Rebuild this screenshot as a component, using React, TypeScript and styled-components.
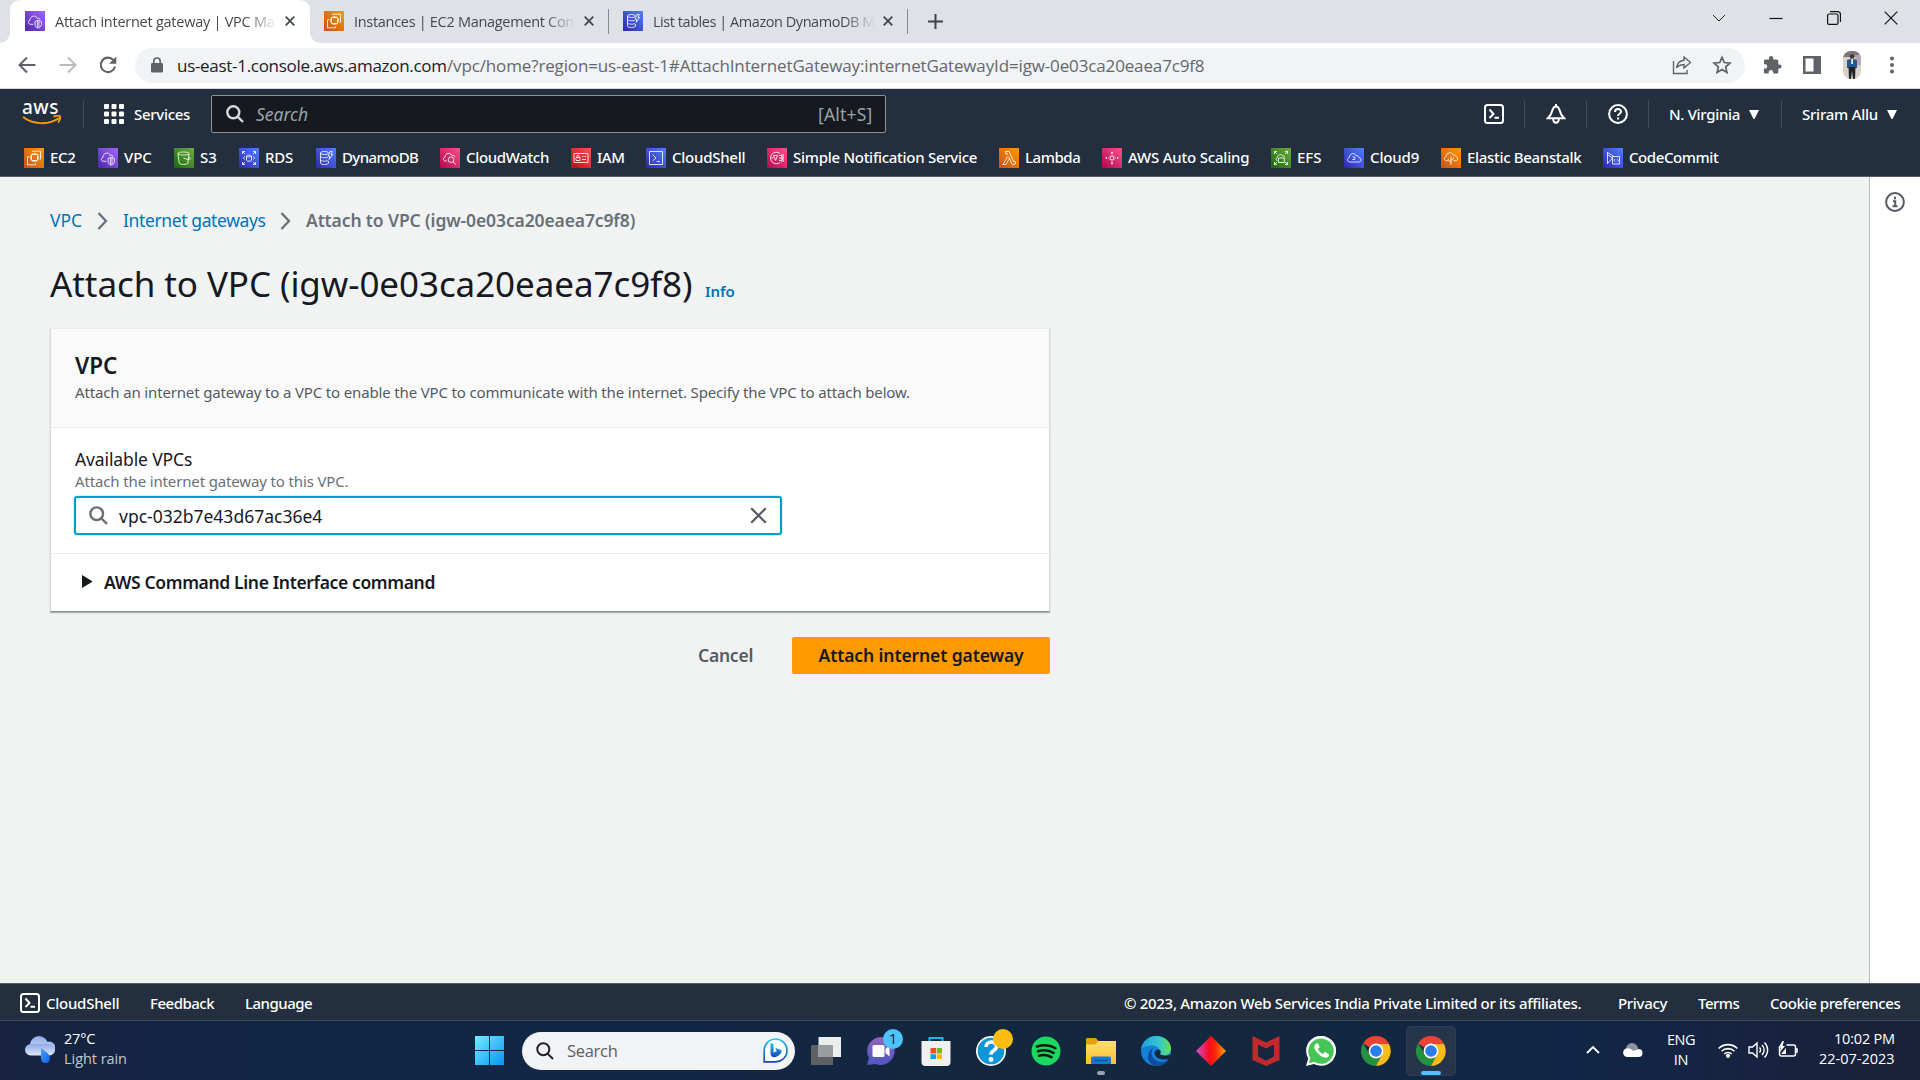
import React from "react";
import styled, { createGlobalStyle, css } from "styled-components";

const ember = `"Noto Sans", "Open Sans", sans-serif`;
const segoe = `"Open Sans", "Noto Sans", sans-serif`;

const Global = createGlobalStyle`
  * { box-sizing: border-box; }
  body { margin: 0; font-family: ${ember}; color: #16191f; overflow: hidden; }
  svg { display: block; flex: none; }
`;

const Screen = styled.div`
  width: 1920px;
  height: 1080px;
  display: flex;
  flex-direction: column;
  overflow: hidden;
  background: #f1f3f3;
`;

type TextProps = { $w?: number; $ls?: number; $size?: number; $weight?: number; $color?: string };
const Text = styled.span<TextProps>`
  display: block;
  flex: none;
  white-space: nowrap;
  ${(p) => p.$w && css`width: ${p.$w}px;`}
  letter-spacing: ${(p) => p.$ls ?? 0}px;
  font-size: ${(p) => p.$size ?? 15}px;
  font-weight: ${(p) => p.$weight ?? 400};
  color: ${(p) => p.$color ?? "inherit"};
`;

/* ---------- browser chrome ---------- */

const TabStrip = styled.div`
  display: flex;
  height: 43px;
  flex: none;
  background: #dee1e6;
  font-family: ${segoe};
  color: #45494d;
`;

const Tab = styled.div<{ $active?: boolean; $w: number }>`
  position: relative;
  display: flex;
  align-items: center;
  width: ${(p) => p.$w}px;
  height: 43px;
  padding: 0 0 1px 14px;
  ${(p) =>
    p.$active &&
    css`
      margin-left: 10px;
      padding-left: 15px;
      background: #fff;
      border-radius: 10px 10px 0 0;
      &::before,
      &::after {
        content: "";
        position: absolute;
        bottom: 0;
        width: 10px;
        height: 10px;
      }
      &::before {
        left: -10px;
        background: radial-gradient(circle at 0 0, transparent 9.5px, #fff 10px);
      }
      &::after {
        right: -10px;
        background: radial-gradient(circle at 100% 0, transparent 9.5px, #fff 10px);
      }
    `}
`;

const TabTitle = styled(Text)`
  margin-left: 10px;
  margin-right: 8px;
  mask-image: linear-gradient(to right, #000 86%, transparent 100%);
`;

const TabSeparator = styled.i`
  width: 1px;
  height: 25px;
  margin-top: 9px;
  background: #868a8f;
`;

const WindowButtons = styled.div`
  display: flex;
  gap: 43.4px;
  align-items: center;
  height: 36px;
  margin-left: auto;
  padding-right: 22px;
`;

const Toolbar = styled.div`
  display: flex;
  align-items: center;
  height: 46px;
  flex: none;
  padding: 0 17px 1px 17px;
  background: #fff;
  border-bottom: 1px solid #d5d7da;
`;

const NavIcons = styled.div`
  display: flex;
  gap: 20.5px;
  width: 118px;
`;

const AddressBar = styled.div`
  display: flex;
  flex: none;
  align-items: center;
  width: 1610px;
  height: 35px;
  padding: 0 13px 0 15px;
  border-radius: 18px;
  background: #f1f3f4;
  font-family: ${segoe};
  color: #202124;
`;

const AddressActions = styled.div`
  display: flex;
  gap: 20px;
  margin-left: auto;
`;

const ToolbarActions = styled.div`
  display: flex;
  align-items: center;
  gap: 20px;
  margin-left: 17px;
`;

/* ---------- service icons ---------- */

const Tile = styled.span<{ $from: string; $to: string }>`
  display: block;
  flex: none;
  width: 20px;
  height: 20px;
  background: linear-gradient(45deg, ${(p) => p.$from}, ${(p) => p.$to});
`;

const tones: Record<string, [string, string]> = {
  orange: ["#c8511b", "#ff9900"],
  purple: ["#4d27a8", "#a166ff"],
  green: ["#1b660f", "#6cae3e"],
  blue: ["#2e27ad", "#527fff"],
  pink: ["#b0084d", "#ff4f8b"],
  red: ["#bd0816", "#ff5252"],
};

const glyphs: Record<string, React.ReactNode> = {
  ec2: <path d="M7.500 6.500h6v6h-6zM9 6.500V5M10.500 6.500V5M12 6.500V5M9 12.500V14M10.500 12.500V14M12 12.500V14M7.500 8H6M7.500 9.500H6M7.500 11H6M13.500 8H15M13.500 9.500H15M13.500 11H15M8.500 4V3.200h8v8h-.9M5.500 8.800H3.500v8h8v-1.500" />,
  vpc: <path d="M8.300 13.300H5.800C2.700 13.300 2.500 9.700 5 9.300 4.800 4.500 11 3.600 12.200 7.500c1.700-.8 2.800.2 2.900 1.400M10 10.500l3.200-1.200 3.200 1.200v3c0 2-1.400 3-3.200 3.600-1.800-.6-3.200-1.600-3.200-3.600zM12.400 10v6.500M14 10v6.500" />,
  s3: <path d="M4 5.500c0-2 11-2 11 0s-11 2-11 0zM4 5.500l1.300 10c1.500 1.300 7 1.300 8.500 0L15 5.500M9.500 10c3 1.300 6.500 2 7 1 .3-.7-1-1.400-2-1.900" />,
  rds: <path d="M7.500 8c0-1.200 5-1.200 5 0v4.300c0 1.200-5 1.200-5 0zM7.500 8c0 1.200 5 1.200 5 0M3.500 6V3.500H6M3.500 3.500 6 6M14 3.500h2.500V6M16.500 3.500 14 6M3.500 14v2.500H6M3.500 16.500 6 14M14 16.500h2.500V14M16.500 16.500 14 14M5.500 8.500 4.500 10l1 1.500M14.500 8.500l1 1.500-1 1.500" />,
  dynamo: <path d="M4.500 5c0-2 8-2 8 0s-8 2-8 0v10c0 2 8 2 8 0v-2M4.500 8.300c0 1.700 6 1.900 7.500.8M4.500 11.700c0 1.700 6 1.900 7.500.8M14 3.500h2.300L15 6.500h1.700L13 11.500l.8-3.300h-1.600z" />,
  watch: <path d="M7 13H5.500C2.800 13 2.700 9.800 5 9.300 4.800 5 10.600 4 12 7.600c1.500-.6 2.600.1 2.900 1.400M8.300 11.700a2.800 2.800 0 1 1 5.600 0 2.800 2.800 0 1 1-5.600 0M13 13.800l3 2.800" />,
  iam: <path d="M3 5.500h14v9H3zM5 9.500h4v3H5zM5.900 9.500V8c0-1.200 2.200-1.200 2.200 0v1.500M11 8.500h1.500M13.500 8.500H15M11 11.500h4" />,
  shell: <path d="M3.500 3.500h13v13h-13zM6.500 6.500 10 10l-3.500 3M10.500 13.500H14" />,
  sns: <path d="M13 5.500A5.800 5.800 0 1 0 13 14.500M6.500 7.500l2 5 2-5zM4 10h2.500M12 7.500h2M12 10h2M12 12.500h2M14.500 6.700h1.800v1.600h-1.800zM14.500 9.200h1.800v1.600h-1.800zM14.500 11.700h1.800v1.600h-1.800z" />,
  lambda: <path d="M6.500 3.500h3.700l4.500 10.300 1.300-.4.600 2.400-3.200 1L9.700 8.700M9 5.900H6.700V3.500M8.600 8.500 3.900 16.500h3l3.200-5.400" />,
  scaling: <path d="M8.200 8.200h3.600v3.600H8.200zM10 6.800V4M9 5l1-1.200L11 5M10 13.200V16M9 15l1 1.200 1-1.200M6.800 10H6M4.500 9v2M3.500 10h1.500M13.200 10h.8M15.500 9v2M15 10h1.500" />,
  efs: <path d="M6.500 12.800c-2-.5-1.700-2.800-.2-3 .2-3.500 4.500-4 5.500-1.700 1.300-.4 2 .6 2 1.400M7.500 10h5.800v4.500H7.500zM3.500 6V3.500H6M3.500 3.500 6 6M14 3.500h2.500V6M16.500 3.500 14 6M3.500 14v2.500H6M3.500 16.500 6 14M14 16.500h2.500V14M16.500 16.500 14 14" />,
  cloud9: <path d="M6 14C2.800 14 2.600 10.300 5.200 9.800 5.200 5.200 11 4.200 12.300 8c1.600-.6 2.600.4 2.700 1.600C18 10.200 17.600 14 14.700 14zM8.500 9h2.300v2.500H8.300" />,
  beanstalk: <path d="M7.500 12.700H5.500C2.700 12.500 2.700 9 5 8.700 5 4.300 10.800 3.500 12.200 7c1.600-.6 2.600.4 2.700 1.600 2.600.5 2.300 4-.4 4.100h-2M10 16.800V8.500M10 13.500c-2.200 0-2.700-1.300-2.700-2.800M10 12c2 0 2.500-1 2.500-2.500" />,
  commit: <path d="M4.500 4v12M4.500 4.500 11 8.500M4.500 6.500 9.500 10 4.500 15.500M9.500 8.500h7v7.500h-7zM12 11l-1.200 1.200L12 13.500M14.300 11l1.200 1.200-1.200 1.300" />,
};

function ServiceIcon({ tone, name }: { tone: string; name: string }) {
  return (
    <Tile $from={tones[tone][0]} $to={tones[tone][1]}>
      <svg width="20" height="20" viewBox="0 0 20 20" fill="none" stroke="#fff" strokeOpacity=".9" strokeWidth=".9">
        {glyphs[name]}
      </svg>
    </Tile>
  );
}

/* ---------- AWS header ---------- */

const Header = styled.header`
  height: 88px;
  flex: none;
  background: #232f3e;
  border-bottom: 1px solid #545b64;
  color: #fff;
`;

const HeaderRow = styled.div`
  display: flex;
  align-items: center;
  height: 50px;
  padding-left: 22px;
`;

const Divider = styled.i<{ $after?: number }>`
  flex: none;
  width: 1px;
  height: 28px;
  margin: 0 ${(p) => p.$after ?? 20}px 0 20px;
  background: #414d5c;
`;

const LogoBox = styled.div`
  width: 41px;
  height: 28px;
  line-height: 15px;
`;

const SearchBox = styled.div`
  display: flex;
  align-items: center;
  width: 675px;
  height: 38px;
  margin-left: 21px;
  padding: 0 12px 0 14px;
  border: 1px solid #879596;
  border-radius: 2px;
  background: #16191f;
`;

const Placeholder = styled(Text)`
  margin: -1px auto 0 12px;
  font-style: italic;
`;

const HeaderTools = styled.div`
  display: flex;
  align-items: center;
  margin-left: auto;
  padding-right: 23px;
`;

const Favorites = styled.nav`
  display: flex;
  gap: 22px;
  padding: 9px 0 0 24px;
`;

const Favorite = styled.a`
  display: flex;
  align-items: center;
  gap: 6px;
  height: 20px;
  & > span:last-child { margin-top: -2px; }
`;

/* ---------- page ---------- */

const Page = styled.div`
  display: flex;
  flex: 1;
  min-height: 0;
`;

const Main = styled.main`
  width: 1869px;
  padding: 28px 50px 0;
`;

const HelpPanel = styled.aside`
  display: flex;
  justify-content: center;
  flex: 1;
  padding-top: 15px;
  border-left: 1px solid #b8bdbd;
  background: #fff;
`;

const Breadcrumbs = styled.div`
  display: flex;
  align-items: center;
  height: 30px;
  gap: 14px;
  svg { margin: 2px 1px 0 0; }
`;

const TitleRow = styled.div`
  display: flex;
  align-items: baseline;
  height: 48px;
  margin: 25px 0 20px;
  line-height: 48px;
`;

const Card = styled.section`
  width: 1000px;
  height: 284px;
  border: 1px solid #d5dbdb;
  border-top-color: #eaeded;
  border-bottom-color: #879596;
  background: #fff;
  box-shadow: 0 1px 1px rgba(0, 28, 36, 0.3);
`;

const CardHeader = styled.div`
  height: 99px;
  padding: 20px 24px;
  border-bottom: 1px solid #eaeded;
  background: #fafafa;
  h2 { margin: 0; font-size: 22.5px; line-height: 33px; }
`;

const CardBody = styled.div`
  height: 126px;
  padding: 19px 24px;
  border-bottom: 1px solid #eaeded;
`;

const Field = styled.div`
  display: flex;
  align-items: center;
  width: 708px;
  height: 39px;
  margin: 5px 0 0 -1px;
  padding: 0 10px 0 13px;
  border: 2px solid #00a1c9;
  border-radius: 3px;
  box-shadow: 0 0 0 1px #d8f0f5;
  background: #fff;
`;

const Expander = styled.div`
  display: flex;
  align-items: center;
  gap: 12px;
  height: 55px;
  padding-left: 31px;
`;

const Actions = styled.div`
  display: flex;
  align-items: center;
  justify-content: flex-end;
  width: 1000px;
  margin-top: 25px;
`;

const Primary = styled.button`
  display: flex;
  align-items: center;
  justify-content: center;
  width: 258px;
  height: 37px;
  margin-left: 39px;
  padding: 0 0 2px;
  border: 0;
  border-radius: 2px;
  background: #ff9900;
  font-family: inherit;
`;

const CancelLabel = styled(Text)`
  margin-top: -2px;
`;

const Footer = styled.footer`
  display: flex;
  align-items: center;
  height: 37px;
  flex: none;
  padding: 1px 20px 0;
  border-top: 1px solid #545b64;
  background: #232f3e;
  color: #fff;
`;

const FooterLinks = styled.div<{ $right?: boolean }>`
  display: flex;
  gap: 31px;
  ${(p) => p.$right && css`margin-left: auto;`}
`;

/* ---------- taskbar ---------- */

const Taskbar = styled.div`
  display: flex;
  align-items: center;
  height: 60px;
  flex: none;
  padding: 0 25px;
  border-top: 1px solid #3f4956;
  background: linear-gradient(90deg, #172340 0, #122645 14%, #122646 33%, #13273f 48%, #13273f 66%, #112646 82%, #162341 90%, #1b2138 100%);
  font-family: ${segoe};
  color: #fff;
`;

const Stack = styled.div<{ $align?: string; $lift?: number }>`
  display: flex;
  flex-direction: column;
  align-items: ${(p) => p.$align ?? "flex-start"};
  padding-bottom: ${(p) => p.$lift ?? 4}px;
  line-height: 20px;
`;

const Weather = styled.div`
  display: flex;
  align-items: center;
  gap: 9px;
  width: 450px;
  svg { margin-bottom: 2px; }
`;

const TaskSearch = styled.div`
  display: flex;
  align-items: center;
  width: 273px;
  height: 38px;
  margin: 0 6px 0 18px;
  padding: 0 7px 0 14px;
  border-radius: 19px;
  background: #f1f3f6;
`;

const TaskIcon = styled.div<{ $active?: boolean; $mark?: string }>`
  position: relative;
  display: flex;
  align-items: center;
  justify-content: center;
  width: 50px;
  height: 50px;
  margin-right: 5px;
  border-radius: 5px;
  ${(p) => p.$active && css`background: #25364c; box-shadow: inset 0 0 0 1px #2d3d52;`}
  ${(p) =>
    p.$mark &&
    css`
      &::after {
        content: "";
        position: absolute;
        bottom: 1px;
        width: ${p.$active ? 20 : 8}px;
        height: 4px;
        border-radius: 2px;
        background: ${p.$mark};
      }
    `}
`;

const Badge = styled.b<{ $color: string }>`
  position: absolute;
  top: 3px;
  right: 3px;
  width: 20px;
  height: 20px;
  border-radius: 50%;
  background: ${(p) => p.$color};
  color: #12233a;
  font-size: 15px;
  font-weight: 400;
  line-height: 19px;
  text-align: center;
`;

const Tray = styled.div`
  display: flex;
  align-items: center;
  margin-left: auto;
  & > svg { margin-bottom: 2px; }
`;

const Spacer = styled.i<{ $w: number }>`
  flex: none;
  width: ${(p) => p.$w}px;
`;

const favorites: [string, string, string, number, number][] = [
  ["EC2", "orange", "ec2", 26, -0.3],
  ["VPC", "purple", "vpc", 28, -0.1],
  ["S3", "green", "s3", 17, -0.1],
  ["RDS", "blue", "rds", 29, -0.2],
  ["DynamoDB", "blue", "dynamo", 76, -0.6],
  ["CloudWatch", "pink", "watch", 83, -0.34],
  ["IAM", "red", "iam", 27, -0.5],
  ["CloudShell", "blue", "shell", 73, -0.25],
  ["Simple Notification Service", "pink", "sns", 184, -0.28],
  ["Lambda", "orange", "lambda", 55, -0.45],
  ["AWS Auto Scaling", "pink", "scaling", 121, -0.2],
  ["EFS", "green", "efs", 25, 0],
  ["Cloud9", "blue", "cloud9", 49, -0.15],
  ["Elastic Beanstalk", "orange", "beanstalk", 114, -0.32],
  ["CodeCommit", "blue", "commit", 89, -0.42],
];

const CloseX = ({ size = 10, color = "#45494d", stroke = 1.8 }) => (
  <svg width={size} height={size} viewBox="0 0 10 10" stroke={color} strokeWidth={stroke}>
    <path d="M.7.7l8.600 8.600M9.300.7.7 9.300" />
  </svg>
);

const Magnifier = ({ size, color, stroke = 2.2 }: { size: number; color: string; stroke?: number }) => (
  <svg width={size} height={size} viewBox="0 0 18 18" fill="none" stroke={color} strokeWidth={stroke}>
    <circle cx="7.300" cy="7.300" r="6" />
    <path d="M11.600 11.600 17 17" />
  </svg>
);

const Terminal = () => (
  <svg width="20" height="20" viewBox="0 0 20 20" fill="none" stroke="#fff" strokeWidth="2">
    <rect x="1" y="1" width="18" height="18" rx="2.500" />
    <path d="M5.500 5.500 9.500 10l-4 4M10.500 13.800H15" />
  </svg>
);

const Caret = () => (
  <svg width="10" height="9" viewBox="0 0 10 9" fill="#fff">
    <path d="M0 0h10L5.500 9h-1z" />
  </svg>
);

const Crumb = () => (
  <svg width="11" height="18" viewBox="0 0 11 18" fill="none" stroke="#687078" strokeWidth="2.300">
    <path d="M1.500 1 9 9l-7.500 8" />
  </svg>
);

const Chrome = () => (
  <svg width="30" height="30" viewBox="0 0 30 30">
    <path d="M15 15 2 7.500A15 15 0 0 1 28 7.500L27.500 8H15z" fill="#ea4335" />
    <path d="M2 7.500A15 15 0 0 0 15 30l6.200-11.400L15 15 8.900 18.600z" fill="#24933f" />
    <path d="M28 7.900A15 15 0 0 1 15 30l6.100-11.400A7 7 0 0 0 15 8z" fill="#fbbc1a" />
    <circle cx="15" cy="15" r="7.400" fill="#fff" />
    <circle cx="15" cy="15" r="5.800" fill="#2b7de9" />
  </svg>
);

function Logo() {
  return (
    <LogoBox>
      <Text $size={19} $weight={500} $w={37} $ls={0.5}>aws</Text>
      <svg width="40" height="11" viewBox="0 0 40 11" fill="none" stroke="#ff9900" strokeWidth="1.900"><path d="M1 2c9 7 25 9 36 1M31.500 1.500c3-.8 6-1 6.500 0s-.5 4-2 6" /></svg>
    </LogoBox>
  );
}

export default function App() {
  return (
    <Screen>
      <Global />
      <TabStrip>
        <Tab $active $w={300}>
          <ServiceIcon tone="purple" name="vpc" />
          <TabTitle $size={14.5} $w={222} $ls={-0.25}>Attach internet gateway | VPC Ma</TabTitle>
          <CloseX />
        </Tab>
        <Tab $w={298}>
          <ServiceIcon tone="orange" name="ec2" />
          <TabTitle $size={14.5} $w={222} $ls={-0.3}>Instances | EC2 Management Con</TabTitle>
          <CloseX />
        </Tab>
        <TabSeparator />
        <Tab $w={298}>
          <ServiceIcon tone="blue" name="dynamo" />
          <TabTitle $size={14.5} $w={222} $ls={-0.45}>List tables | Amazon DynamoDB M</TabTitle>
          <CloseX />
        </Tab>
        <TabSeparator />
        <Tab $w={60}>
          <Spacer $w={5.5} />
          <svg width="15" height="15" viewBox="0 0 15 15" stroke="#3f4347" strokeWidth="2"><path d="M7.500 0v15M0 7.500h15" /></svg>
        </Tab>
        <WindowButtons>
          <svg width="14" height="14" viewBox="0 0 14 14" fill="none" stroke="#222"><path d="M1 4l6 6 6-6" /></svg>
          <svg width="14" height="14" viewBox="0 0 14 14" stroke="#111" strokeWidth="1.200"><path d="M.5 7.500h13" /></svg>
          <svg width="14" height="14" viewBox="0 0 14 14" fill="none" stroke="#111" strokeWidth="1.200"><rect x=".6" y="3" width="10.400" height="10.400" rx="1.500" /><path d="M3 .6h7.500a3 3 0 0 1 3 3V11" /></svg>
          <svg width="14" height="14" viewBox="0 0 14 14" stroke="#111" strokeWidth="1.200"><path d="M.7.7l12.600 12.600M13.300.7.7 13.300" /></svg>
        </WindowButtons>
      </TabStrip>

      <Toolbar>
        <NavIcons>
          <svg width="20" height="20" viewBox="0 0 20 20" fill="none" stroke="#5f6368" strokeWidth="2"><path d="M18.500 10H3M10 2.500 2.500 10l7.500 7.500" /></svg>
          <svg width="20" height="20" viewBox="0 0 20 20" fill="none" stroke="#babcbe" strokeWidth="2"><path d="M1.500 10H17M10 2.500l7.500 7.500-7.500 7.500" /></svg>
          <svg width="20" height="20" viewBox="0 0 20 20"><path d="M17 11.500A7.200 7.200 0 1 1 15.300 5" fill="none" stroke="#5f6368" strokeWidth="2.100" /><path d="M18.300 1.500v7.300H11z" fill="#5f6368" /></svg>
        </NavIcons>
        <AddressBar>
          <svg width="14" height="16" viewBox="0 0 14 16"><rect x="1" y="6" width="12" height="9.500" rx="1.300" fill="#5f6368" /><path d="M3.800 6.500V4.200a3.200 3.200 0 0 1 6.400 0v2.300" fill="none" stroke="#5f6368" strokeWidth="1.600" /></svg>
          <Spacer $w={13} />
          <Text $size={17} $w={270} $ls={-0.3}>us-east-1.console.aws.amazon.com</Text>
          <Text $size={17} $w={757} $ls={-0.14} $color="#64686c">/vpc/home?region=us-east-1#AttachInternetGateway:internetGatewayId=igw-0e03ca20eaea7c9f8</Text>
          <AddressActions>
            <svg width="20" height="20" viewBox="0 0 20 20" fill="none" stroke="#5f6368" strokeWidth="1.400"><path d="M1.500 6v12.500h13.500V15M12 2l6.500 5.500L12 13v-3.300c-3.500-.2-6 .7-7.500 3.300C5 8.500 7.500 5.800 12 5.300z" /></svg>
            <svg width="20" height="20" viewBox="0 0 20 20" fill="none" stroke="#5f6368" strokeWidth="1.700"><path d="M10 2.300l2.300 5.200 5.700.6-4.300 3.800 1.200 5.600-4.900-2.900-4.900 2.900 1.200-5.600L2 8.100l5.700-.6z" /></svg>
          </AddressActions>
        </AddressBar>
        <ToolbarActions>
          <svg width="20" height="20" viewBox="0 0 20 20" fill="#5f6368"><path d="M17.500 9.500h-1.200V6a1.600 1.600 0 0 0-1.600-1.600h-3.500V3.100a2.100 2.100 0 0 0-4.200 0v1.300H3.500A1.600 1.600 0 0 0 1.900 6v3.200h1.200a2.200 2.200 0 0 1 0 4.400H1.900v3.300c0 .9.700 1.600 1.600 1.600h3.200v-1.200a2.200 2.200 0 0 1 4.500 0v1.200h3.500c.9 0 1.600-.7 1.600-1.600v-3.300h1.200a2.050 2.050 0 0 0 0-4.100z" /></svg>
          <svg width="20" height="20" viewBox="0 0 20 20"><path d="M1 1h18v18H1zm2.500 2.500v13h8v-13z" fill="#5f6368" fillRule="evenodd" /></svg>
          <svg width="20" height="28" viewBox="0 0 20 28">
            <defs><clipPath id="avatar"><rect x="1" y="0" width="18" height="28" rx="8" /></clipPath></defs>
            <g clipPath="url(#avatar)">
              <path d="M0 0h20v28H0z" fill="#d9d2c9" /><path d="M0 0h20v6H0z" fill="#79757d" /><path d="M13 4h7v10h-7z" fill="#b8a5ae" />
              <circle cx="10" cy="5.500" r="2.300" fill="#47332d" /><path d="M5 9l5-1.500L15 9v8H5z" fill="#235a96" /><path d="M9.300 8h1.600v5H9.300z" fill="#fff" /><path d="M6.500 16h7L13 28h-2l-1-8-1 8H7z" fill="#20222b" />
            </g>
          </svg>
          <svg width="20" height="20" viewBox="0 0 20 20" fill="#5f6368"><circle cx="10" cy="3.500" r="2" /><circle cx="10" cy="10" r="2" /><circle cx="10" cy="16.500" r="2" /></svg>
        </ToolbarActions>
      </Toolbar>

      <Header>
        <HeaderRow>
          <Logo />
          <Divider />
          <svg width="20" height="20" viewBox="0 0 20 20" fill="#fff">
            {[0, 7.5, 15].map((y) => [0, 7.5, 15].map((x) => <rect key={`${x}-${y}`} x={x} y={y} width="5" height="5" rx="1" />))}
          </svg>
          <Spacer $w={10} />
          <Text $w={56} $ls={-0.3} $weight={500}>Services</Text>
          <SearchBox>
            <Magnifier size={18} color="#d5dbdb" stroke={2.4} />
            <Placeholder $size={17.5} $w={52} $color="#95a5a6">Search</Placeholder>
            <Text $size={17.5} $w={55} $ls={0.2} $color="#95a5a6">[Alt+S]</Text>
          </SearchBox>
          <HeaderTools>
            <Terminal />
            <Divider $after={21} />
            <svg width="20" height="20" viewBox="0 0 20 20" fill="none" stroke="#fff" strokeWidth="2"><path d="M10 2.500C8.500 2.500 7 4 6.500 6 5.800 9.500 4 12 1.800 14.300h16.400C16 12 14.200 9.500 13.500 6 13 4 11.500 2.500 10 2.500zM10 2.500V0M7.200 15c0 5 5.600 5 5.600 0" /></svg>
            <Divider $after={21} />
            <svg width="20" height="20" viewBox="0 0 20 20" fill="none" stroke="#fff" strokeWidth="2"><circle cx="10" cy="10" r="8.900" /><path d="M7 8c0-4 6-3.800 6-.3 0 2.200-3 2-3 4.300M10 13.500v2" /></svg>
            <Divider />
            <Text $w={71} $ls={-0.32} $weight={500}>N. Virginia</Text>
            <Spacer $w={9} /><Caret /><Spacer $w={2} />
            <Divider />
            <Text $w={76} $ls={-0.25} $weight={500}>Sriram Allu</Text>
            <Spacer $w={9} /><Caret />
          </HeaderTools>
        </HeaderRow>
        <Favorites>
          {favorites.map(([label, tone, icon, w, ls]) => (
            <Favorite key={label}>
              <ServiceIcon tone={tone} name={icon} />
              <Text $w={w} $ls={ls} $weight={500}>{label}</Text>
            </Favorite>
          ))}
        </Favorites>
      </Header>

      <Page>
        <Main>
          <Breadcrumbs>
            <Text $size={17.5} $w={33} $color="#0073bb">VPC</Text>
            <Crumb />
            <Text $size={17.5} $w={143} $ls={-0.38} $color="#0073bb">Internet gateways</Text>
            <Crumb />
            <Text $size={17.5} $w={330} $ls={-0.12} $weight={600} $color="#687078">Attach to VPC (igw-0e03ca20eaea7c9f8)</Text>
          </Breadcrumbs>
          <TitleRow>
            <Text $size={35} $w={642} $ls={-0.08}>Attach to VPC (igw-0e03ca20eaea7c9f8)</Text>
            <Spacer $w={13} />
            <Text $w={30} $weight={600} $ls={-0.1} $color="#0073bb">Info</Text>
          </TitleRow>
          <Card>
            <CardHeader>
              <h2><Text $size={22.5} $w={43} $weight={600}>VPC</Text></h2>
              <Text $w={835} $ls={-0.15} $color="#545b64">Attach an internet gateway to a VPC to enable the VPC to communicate with the internet. Specify the VPC to attach below.</Text>
            </CardHeader>
            <CardBody>
              <Text $size={17.5} $w={117} $ls={-0.12}>Available VPCs</Text>
              <Text $w={273} $ls={-0.14} $color="#687078">Attach the internet gateway to this VPC.</Text>
              <Field>
                <Magnifier size={19} color="#687078" stroke={2.3} />
                <Spacer $w={11} />
                <Text $size={17.5} $w={203}>vpc-032b7e43d67ac36e4</Text>
                <Spacer $w={428} />
                <CloseX size={17} color="#545b64" stroke={1.3} />
              </Field>
            </CardBody>
            <Expander>
              <svg width="10" height="13" viewBox="0 0 10 13" fill="#16191f"><path d="M0 0l10 6v1L0 13z" /></svg>
              <Text $size={17.5} $w={331} $ls={-0.36} $weight={600}>AWS Command Line Interface command</Text>
            </Expander>
          </Card>
          <Actions>
            <CancelLabel $size={17.5} $w={55} $ls={-0.24} $weight={600} $color="#545b64">Cancel</CancelLabel>
            <Primary><Text $size={17.5} $w={206} $ls={-0.1} $weight={600} $color="#16191f">Attach internet gateway</Text></Primary>
          </Actions>
        </Main>
        <HelpPanel>
          <svg width="20" height="20" viewBox="0 0 20 20" fill="none" stroke="#545b64" strokeWidth="2"><circle cx="10" cy="10" r="8.900" /><path d="M10 4.800v2.400M8 9.300h2.200v5M7.500 14.300h5" /></svg>
        </HelpPanel>
      </Page>

      <Footer>
        <Terminal />
        <Spacer $w={6} />
        <FooterLinks>
          <Text $w={73} $ls={-0.26} $weight={500}>CloudShell</Text>
          <Text $w={64} $ls={-0.5} $weight={500}>Feedback</Text>
          <Text $w={67} $ls={-0.5} $weight={500}>Language</Text>
        </FooterLinks>
        <FooterLinks $right>
          <Text $w={463} $ls={-0.3} $weight={500}>© 2023, Amazon Web Services India Private Limited or its affiliates.</Text>
          <Text $w={49} $ls={-0.33} $weight={500}>Privacy</Text>
          <Text $w={41} $ls={-0.5} $weight={500}>Terms</Text>
          <Text $w={130} $ls={-0.43} $weight={500}>Cookie preferences</Text>
        </FooterLinks>
      </Footer>

      <Taskbar>
        <Weather>
          <svg width="30" height="27" viewBox="0 0 30 27">
            <defs>
              <linearGradient id="cl" x2="0" y2="1"><stop stopColor="#8fa9ea" /><stop offset="1" stopColor="#dfe8fa" /></linearGradient>
              <linearGradient id="drop" x2="1" y2="1"><stop stopColor="#4aa0ff" /><stop offset="1" stopColor="#0a62ef" /></linearGradient>
            </defs>
            <circle cx="14" cy="9" r="9" fill="url(#cl)" /><circle cx="24" cy="12" r="6.500" fill="#a9c0f3" /><rect y="8" width="30" height="11.500" rx="5.700" fill="url(#cl)" />
            <path d="M16 12c5 4 9 6 9 10.500a4.500 4.500 0 0 1-9 0z" fill="url(#drop)" />
          </svg>
          <Stack>
            <Text $size={14.5} $w={31} $ls={-0.2}>27°C</Text>
            <Text $size={14.5} $w={63} $ls={-0.05} $color="#c3c8d2">Light rain</Text>
          </Stack>
        </Weather>
        <svg width="29" height="29" viewBox="0 0 29 29">
          <defs><linearGradient id="win" x2="1" y2="1"><stop stopColor="#72edff" /><stop offset="1" stopColor="#0a93f5" /></linearGradient></defs>
          <path d="M0 0h14v14H0zM15 0h14v14H15zM0 15h14v14H0zM15 15h14v14H15z" fill="url(#win)" />
        </svg>
        <TaskSearch>
          <Magnifier size={18} color="#222" stroke={2} />
          <Spacer $w={13} />
          <Text $size={16.5} $w={51} $ls={-0.3} $color="#5b5e63">Search</Text>
          <Spacer $w={145} />
          <svg width="25" height="25" viewBox="0 0 25 25">
            <defs><linearGradient id="bing" x1="0" y1="0" x2="0" y2="1"><stop stopColor="#23c4e8" /><stop offset="1" stopColor="#1746b5" /></linearGradient></defs>
            <path d="M1.200 23.800V12.500A11.400 11.400 0 1 1 12.500 23.800z" fill="#fff" stroke="url(#bing)" strokeWidth="1.700" />
            <path d="M7.500 5l3 1v8.800l3.200-1.800-1.500-3.300 6 2.300c1.200 2.800-1.200 4.800-3.800 6.200-3.200 1.900-6.900 1-6.900-3z" fill="url(#bing)" />
          </svg>
        </TaskSearch>

        <TaskIcon>
          <svg width="30" height="28" viewBox="0 0 30 28"><path d="M0 8h22v20H0z" fill="#5e6064" /><path d="M7.500 0H30v20H7.500z" fill="#eceded" /><path d="M7.500 8H22v12H7.500z" fill="#9b9c9d" /></svg>
        </TaskIcon>
        <TaskIcon>
          <svg width="30" height="30" viewBox="0 0 30 30">
            <defs><linearGradient id="chat" x2="0" y2="1"><stop stopColor="#9163b8" /><stop offset="1" stopColor="#4f55c5" /></linearGradient></defs>
            <path d="M15 1a14 14 0 1 1-5.500 27L1 29l2-7A14 14 0 0 1 15 1z" fill="url(#chat)" /><rect x="6.500" y="9" width="12" height="12" rx="1.500" fill="#fff" /><path d="M19.500 13l4-3.500v11l-4-3.500z" fill="#fff" />
          </svg>
          <Badge $color="#4cc2ff">1</Badge>
        </TaskIcon>
        <TaskIcon>
          <svg width="30" height="30" viewBox="0 0 30 30">
            <path d="M8.500 7V2h13v5" fill="none" stroke="#25b4ea" strokeWidth="2" /><path d="M.5 5h29v21a4 4 0 0 1-4 4h-21a4 4 0 0 1-4-4z" fill="#f0f0f0" />
            <path d="M9.500 12H15v5.500H9.500z" fill="#f25022" /><path d="M15.700 12h5.300v5.500h-5.300z" fill="#7fba00" /><path d="M9.500 18.200H15V23H9.500z" fill="#00a4ef" /><path d="M15.700 18.200h5.300V23h-5.300z" fill="#ffb900" />
          </svg>
        </TaskIcon>
        <TaskIcon>
          <svg width="30" height="30" viewBox="0 0 30 30">
            <circle cx="15" cy="15" r="15" fill="#fff" /><circle cx="15" cy="15" r="13.300" fill="#0e96d8" />
            <path d="M10 11c0-6.500 10.500-6.500 10.500-.5 0 4.500-5.500 3.500-5.500 8" fill="none" stroke="#fff" strokeWidth="3.600" /><circle cx="15" cy="23.500" r="2.400" fill="#fff" />
          </svg>
          <Badge $color="#fdbc11" />
        </TaskIcon>
        <TaskIcon>
          <svg width="30" height="30" viewBox="0 0 30 30"><circle cx="15" cy="15" r="14.500" fill="#1ed760" /><path d="M6 10.500c6-2 13.500-1.300 18.500 1.700M7 15.200c5-1.500 11-1 15.500 1.700M8 19.700c4-1.300 8.500-.8 12.500 1.500" fill="none" stroke="#0c1a12" strokeWidth="2.500" strokeLinecap="round" /></svg>
        </TaskIcon>
        <TaskIcon $mark="#9aa2ad">
          <svg width="30" height="30" viewBox="0 0 30 30">
            <defs><linearGradient id="fold" x2="0" y2="1"><stop stopColor="#ffdf70" /><stop offset="1" stopColor="#fbc02e" /></linearGradient></defs>
            <path d="M0 3.500C0 2.500.5 2 1.500 2H10l3 3.500-3 4H0z" fill="#e29e0b" /><path d="M0 8.500h9L12.500 5H30v23H0z" fill="url(#fold)" /><path d="M5 28v-5.500a2 2 0 0 1 2-2h16a2 2 0 0 1 2 2V28z" fill="#1577cf" /><path d="M8.500 24.500h13" stroke="#0b4f95" strokeWidth="1.200" />
          </svg>
        </TaskIcon>
        <TaskIcon>
          <svg width="30" height="30" viewBox="0 0 30 30">
            <defs><linearGradient id="edge" x2="1"><stop stopColor="#1f9fe0" /><stop offset=".6" stopColor="#35c6d0" /><stop offset="1" stopColor="#66e34f" /></linearGradient></defs>
            <circle cx="15" cy="15" r="15" fill="#1580d8" />
            <path d="M0 13C1.500 5 8 0 15 0c9 0 15 6 15 12.500 0 5-4 7-8 7-3 0-4.500-1-3.500-2.300C20 14 17 9.500 11.500 9.500 6 9.500 1.500 11.500 0 13z" fill="url(#edge)" />
            <path d="M12 12c-3 5-1 11 5 13.500 4 1.500 8.500.5 11-2.500A15 15 0 0 1 15 30C10 29 7 25 7 21c0-4 2-7.500 5-9z" fill="#114a9b" />
            <path d="M18 13.500c-4 0-5.500 3.500-3.500 6.500s8 4.500 15 2.500l.5-4c-2 1-4.500 1.500-7 1-3-.3-4.800-1.500-3.500-2.500.8-1 .2-2.800-1.500-3.500z" fill="#13273f" />
          </svg>
        </TaskIcon>
        <TaskIcon>
          <svg width="30" height="30" viewBox="0 0 30 30">
            <defs><linearGradient id="dia" x2="1"><stop stopColor="#d052d8" /><stop offset=".45" stopColor="#fb0a1c" /><stop offset=".65" stopColor="#fb2a05" /><stop offset="1" stopColor="#fca510" /></linearGradient></defs>
            <path d="M15 0 30 15 15 30 0 15z" fill="url(#dia)" />
          </svg>
        </TaskIcon>
        <TaskIcon>
          <svg width="30" height="30" viewBox="0 0 30 30"><path d="M1.500 0 15 6.500 28.500 0v24L15 30 1.500 24zM7 8.500v12l8 4 8-4v-12l-8 4z" fill="#c02a2c" fillRule="evenodd" /></svg>
        </TaskIcon>
        <TaskIcon>
          <svg width="30" height="30" viewBox="0 0 30 30"><path d="M0 30l2.200-7.600A15 15 0 1 1 8 28z" fill="#fff" /><path d="M2.800 27.200l1.700-5A12.700 12.700 0 1 1 8.500 26z" fill="#45c556" /><path d="M10.500 7.500c-3 1.500-3 5 .5 9s8 6.500 11 4.500c1-1 1.500-2.500.5-3L19.500 16c-1-.3-1.500 1.700-2.500 1.700-2 0-5-3.700-5-4.700s1.700-1.300 1.500-2.300L12.300 8c-.3-.7-1-.8-1.800-.5z" fill="#fff" /></svg>
        </TaskIcon>
        <TaskIcon><Chrome /></TaskIcon>
        <TaskIcon $active $mark="#4cc2ff"><Chrome /></TaskIcon>

        <Tray>
          <svg width="14" height="9" viewBox="0 0 14 9" fill="none" stroke="#fff" strokeWidth="1.800"><path d="M1 8l6-6 6 6" /></svg>
          <Spacer $w={23} />
          <svg width="20" height="14" viewBox="0 0 20 14"><circle cx="9" cy="6" r="6" fill="#8d94a1" /><path d="M4.500 14a4.400 4.400 0 0 1 0-8.800c3 0 4.500 2 6 2.800L15.500 6a4 4 0 0 1 0 8z" fill="#fff" /></svg>
          <Spacer $w={24} />
          <Stack $align="center" $lift={2}>
            <Text $size={14.5} $ls={-0.5}>ENG</Text>
            <Text $size={14.5} $ls={-0.3}>IN</Text>
          </Stack>
          <Spacer $w={23} />
          <svg width="20" height="16" viewBox="0 0 20 16" fill="none" stroke="#fff" strokeWidth="1.600"><path d="M.7 6.500a13 13 0 0 1 18.600 0M3.500 9.300a9.200 9.200 0 0 1 13 0M6.300 12a5.300 5.300 0 0 1 7.400 0" /><circle cx="10" cy="13.800" r="1.300" fill="#fff" /></svg>
          <Spacer $w={10} />
          <svg width="21" height="18" viewBox="0 0 21 18" fill="none" stroke="#fff" strokeWidth="1.400"><path d="M1 6h3.500L9 2v14l-4.500-4H1zM11.500 6.500a3.500 3.500 0 0 1 0 5M14 4a7 7 0 0 1 0 10M16.500 1.500a10.600 10.600 0 0 1 0 15" /></svg>
          <Spacer $w={9} />
          <svg width="20" height="18" viewBox="0 0 20 18" fill="none" stroke="#fff" strokeWidth="1.500"><path d="M8.500 4h7a2 2 0 0 1 2 2v7a2 2 0 0 1-2 2H3.500a2 2 0 0 1-2-2V6" /><path d="M18.200 7h.6a1 1 0 0 1 1 1v3a1 1 0 0 1-1 1h-.6z" fill="#fff" stroke="none" /><path d="M4.500 0 .5 6.500H3L1.500 11.500 7 5H4.500L6 0zM3.500 12.500 8 7v6H3.500z" fill="#fff" stroke="none" /></svg>
          <Spacer $w={21} />
          <Stack $align="flex-end">
            <Text $size={14.5} $w={61} $ls={-0.2}>10:02 PM</Text>
            <Text $size={14.5} $w={76}>22-07-2023</Text>
          </Stack>
        </Tray>
      </Taskbar>
    </Screen>
  );
}
